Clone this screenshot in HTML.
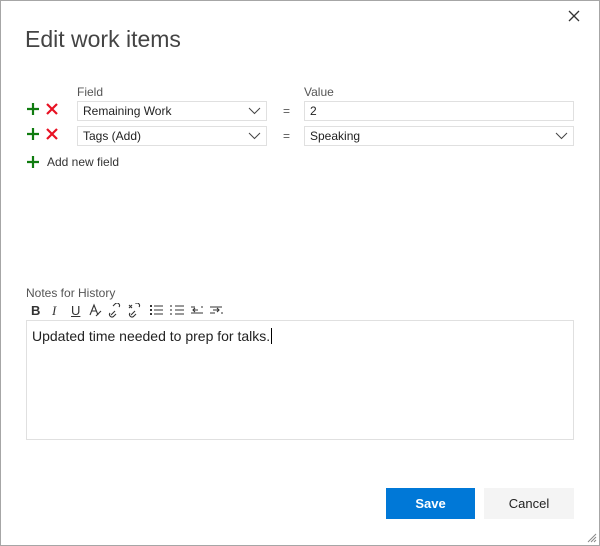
<!DOCTYPE html><html><head><style>
body{margin:0;width:600px;height:546px;overflow:hidden;background:#fff;font-family:"Liberation Sans",sans-serif;}
.d{position:absolute;left:0;top:0;width:598px;height:544px;border:1px solid #a6a6a6;}
.a{position:absolute;}
.box{position:absolute;border:1px solid #e0e0e0;height:18px;font-size:12px;line-height:18px;padding-left:5px;box-sizing:content-box;color:#222;}
.lbl{position:absolute;font-size:12px;color:#555;}
.chev{position:absolute;right:5px;top:5px;}
.tb{position:absolute;top:303px;font-size:13px;color:#333;}
</style></head><body><div class="d"></div>
<div class="a" style="left:25px;top:26px;font-size:23px;color:#444;font-weight:300">Edit work items</div>
<svg class="a" style="left:568px;top:10px" width="12" height="12"><path d="M1 1L11 11M11 1L1 11" stroke="#333" stroke-width="1.3"/></svg>
<div class="lbl" style="left:77px;top:85px">Field</div>
<div class="lbl" style="left:304px;top:85px">Value</div>
<svg class="a" style="left:26px;top:102px" width="36" height="40"><g stroke-width="2.2"><path d="M7 1V13M1 7H13" stroke="#107c10"/><path d="M21 2L31 12M31 2L21 12" stroke="#e81123"/><path d="M7 26V38M1 32H13" stroke="#107c10"/><path d="M21 27L31 37M31 27L21 37" stroke="#e81123"/></g></svg>
<div class="box" style="left:77px;top:101px;width:183px">Remaining Work<svg class="chev" width="13" height="8"><path d="M1 1L6.5 6.5L12 1" fill="none" stroke="#444"/></svg></div>
<div class="box" style="left:77px;top:126px;width:183px">Tags (Add)<svg class="chev" width="13" height="8"><path d="M1 1L6.5 6.5L12 1" fill="none" stroke="#444"/></svg></div>
<div class="a" style="left:283px;top:104px;font-size:12px;color:#555">=</div>
<div class="a" style="left:283px;top:129px;font-size:12px;color:#555">=</div>
<div class="box" style="left:304px;top:101px;width:263px">2</div>
<div class="box" style="left:304px;top:126px;width:263px">Speaking<svg class="chev" width="13" height="8"><path d="M1 1L6.5 6.5L12 1" fill="none" stroke="#444"/></svg></div>
<svg class="a" style="left:26px;top:155px" width="14" height="14"><path d="M7 1V13M1 7H13" stroke="#107c10" stroke-width="2.2"/></svg>
<div class="a" style="left:47px;top:155px;font-size:12px;color:#333">Add new field</div>
<div class="lbl" style="left:26px;top:286px">Notes for History</div>
<div class="tb" style="left:31px;font-weight:bold">B</div>
<div class="tb" style="left:52px;font-style:italic;font-family:'Liberation Serif'">I</div>
<div class="tb" style="left:71px;text-decoration:underline">U</div>
<svg class="a" style="left:89px;top:303px" width="140" height="15"><g fill="none" stroke="#333" stroke-width="1.1">
<path d="M1 12L5 2L9 12M3 8H7"/><path d="M7 13L12 8"/>
<path d="M22 12L26 8M21 10a2.5 2.5 0 0 0 3.5 3.5L27 11M30 4a2.5 2.5 0 0 0 -3.5 -3.5L24 3"/>
<path d="M40 2L43 5M43 2L40 5M42 12L46 8M41 10a2.5 2.5 0 0 0 3.5 3.5L47 11M50 4a2.5 2.5 0 0 0-3.5-3.5"/>
<path d="M65 3H74M65 7H74M65 11H74"/><path d="M61 3H63M61 7H63M61 11H63" stroke-width="2"/>
<path d="M86 3H95M86 7H95M86 11H95M82 2V4M82 6V8M82 10V12"/>
<path d="M102 4H106M112 4H114M102 10H114M109 7H104M106 5L104 7L106 9"/>
<path d="M121 4H133M121 10H126M132 10H134M124 7H130M128 5L130 7L128 9"/>
</g></svg>
<div class="a" style="left:26px;top:320px;width:546px;height:118px;border:1px solid #e0e0e0"></div>
<div class="a" style="left:32px;top:328px;font-size:14px;color:#222">Updated time needed to prep for talks.<span style="border-left:1px solid #000;margin-left:1px"></span></div>
<div class="a" style="left:386px;top:488px;width:89px;height:31px;background:#0078d7;color:#fff;font-size:13px;font-weight:bold;text-align:center;line-height:31px">Save</div>
<div class="a" style="left:484px;top:488px;width:90px;height:31px;background:#f4f4f4;color:#222;font-size:13px;text-align:center;line-height:31px">Cancel</div>
<svg class="a" style="left:587px;top:533px" width="10" height="10"><path d="M9 1L1 9M9 4L4 9M9 7L7 9" stroke="#888"/></svg>
</body></html>
